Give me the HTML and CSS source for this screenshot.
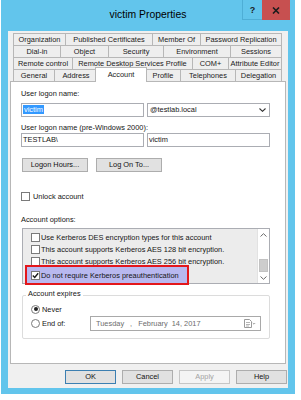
FILE: index.html
```html
<!DOCTYPE html>
<html lang="en">

<head>
    <meta charset="UTF-8">
    <meta name="viewport" content="width=device-width, initial-scale=1.0">
    <title>victim Properties</title>
    <link rel="stylesheet" href="styles.css">
</head>

<body>
    <div class="window">
        <div class="titlebar">
            <span></span>
            <span class="title">victim Properties</span>
            <div class="caption-buttons">
                <div class="cap-btn help">?</div>
                <div class="cap-btn close">
                    <svg width="8" height="7" viewBox="0 0 8 7"><path d="M1 0.5l6 6M7 0.5l-6 6" stroke="#1c1c1c" stroke-width="1.6" fill="none"/></svg>
                </div>
            </div>
        </div>

        <div class="client">
            <!-- Tab strip, four rows -->
            <div class="tabs">
                <div class="tab-row row1">
                    <div class="tab">Organization</div>
                    <div class="tab">Published Certificates</div>
                    <div class="tab">Member Of</div>
                    <div class="tab">Password Replication</div>
                </div>
                <div class="tab-row row2">
                    <div class="tab">Dial-in</div>
                    <div class="tab">Object</div>
                    <div class="tab">Security</div>
                    <div class="tab">Environment</div>
                    <div class="tab">Sessions</div>
                </div>
                <div class="tab-row row3">
                    <div class="tab">Remote control</div>
                    <div class="tab">Remote Desktop Services Profile</div>
                    <div class="tab">COM+</div>
                    <div class="tab">Attribute Editor</div>
                </div>
                <div class="tab-row row4">
                    <div class="tab">General</div>
                    <div class="tab">Address</div>
                    <div class="tab active">Account</div>
                    <div class="tab">Profile</div>
                    <div class="tab">Telephones</div>
                    <div class="tab">Delegation</div>
                </div>
            </div>

            <div class="panel">
                <div class="field-label">User logon name:</div>
                <div class="input-row first">
                    <div class="textbox"><span class="selected-text">victim</span></div>
                    <div class="textbox combo">
                        <span>@testlab.local</span>
                        <svg width="7" height="4" viewBox="0 0 7 4"><polyline points="0.5,0.5 3.5,3.3 6.5,0.5" fill="none" stroke="#333" stroke-width="1.1"/></svg>
                    </div>
                </div>

                <div class="field-label second">User logon name (pre-Windows 2000):</div>
                <div class="input-row">
                    <div class="textbox">TESTLAB\</div>
                    <div class="textbox">victim</div>
                </div>

                <div class="btn-row">
                    <div class="btn wide">Logon Hours...</div>
                    <div class="btn wide">Log On To...</div>
                </div>

                <div class="check-row">
                    <span class="check"></span>
                    <span>Unlock account</span>
                </div>

                <div class="field-label options">Account options:</div>
                <div class="listbox">
                    <div class="list-items">
                        <div class="list-item"><span class="check"></span>Use Kerberos DES encryption types for this account</div>
                        <div class="list-item"><span class="check"></span>This account supports Kerberos AES 128 bit encryption.</div>
                        <div class="list-item"><span class="check"></span>This account supports Kerberos AES 256 bit encryption.</div>
                        <div class="list-item selected">
                            <span class="check">
                                <svg width="7" height="7" viewBox="0 0 7 7"><polyline points="0.8,3.6 2.7,5.4 6.2,1.2" fill="none" stroke="#1a1a1a" stroke-width="1.4"/></svg>
                            </span>Do not require Kerberos preauthentication
                        </div>
                    </div>
                    <div class="scrollbar">
                        <div class="sb-arrow up">
                            <svg width="7" height="4" viewBox="0 0 7 4"><polyline points="0.5,3.5 3.5,0.7 6.5,3.5" fill="none" stroke="#6a6a6a" stroke-width="1"/></svg>
                        </div>
                        <div class="sb-track"><div class="sb-thumb"></div></div>
                        <div class="sb-arrow down">
                            <svg width="7" height="4" viewBox="0 0 7 4"><polyline points="0.5,0.5 3.5,3.3 6.5,0.5" fill="none" stroke="#6a6a6a" stroke-width="1"/></svg>
                        </div>
                    </div>
                </div>

                <div class="group">
                    <div class="group-title">Account expires</div>
                    <div class="radio-row">
                        <span class="radio checked"></span>
                        <span>Never</span>
                    </div>
                    <div class="radio-row">
                        <span class="radio"></span>
                        <span>End of:</span>
                        <div class="datepicker">
                            <span>Tuesday</span>
                            <span class="d-comma">,</span>
                            <span class="d-month">February</span>
                            <span class="d-day">14, 2017</span>
                            <svg class="cal-icon" width="12" height="9" viewBox="0 0 12 9">
                                <path d="M0.5 0.5h5l2 2v6h-7z" fill="#fff" stroke="#9a9a9a"/>
                                <path d="M2 3.5h4M2 5.5h4M2 7h3" stroke="#b5b5b5"/>
                                <polyline points="8.8,4 10,5.2 11.2,4" fill="none" stroke="#a0a0a0"/>
                            </svg>
                        </div>
                    </div>
                </div>
            </div>

            <div class="dialog-buttons">
                <div class="btn default">OK</div>
                <div class="btn">Cancel</div>
                <div class="btn disabled">Apply</div>
                <div class="btn">Help</div>
            </div>
        </div>
    </div>
</body>

</html>
```

FILE: styles.css
```css
/* Global */
* {
    box-sizing: border-box;
}

body {
    margin: 0;
    background: #ffffff;
    font-family: "Liberation Sans", Arial, sans-serif;
    font-size: 7.4px;
    color: #151515;
}

/* Window frame */
.window {
    width: 294px;
    height: 394px;
    margin-left: 1px;
    background: #62c5ec;
    display: flex;
    flex-direction: column;
}

.titlebar {
    height: 31px;
    flex: 0 0 31px;
    display: grid;
    grid-template-columns: 1fr auto 1fr;
    padding: 0 5px;
}

.title {
    font-size: 10.4px;
    line-height: 30px;
    color: #000;
}

.caption-buttons {
    display: flex;
    justify-content: flex-end;
    align-items: flex-start;
}

.cap-btn {
    height: 20px;
    display: flex;
    align-items: center;
    justify-content: center;
}

.cap-btn.help {
    width: 20px;
    font-weight: bold;
    font-size: 9px;
    color: #1c1c1c;
    border: 1px solid #4eaed6;
    border-top: none;
    border-right: none;
}

.cap-btn.close {
    width: 28px;
    background: #c75050;
}

.client {
    flex: 1;
    margin: 0 7px 6px;
    background: #f0f0f0;
    padding-top: 2px;
}

/* Tabs */
.tabs {
    margin: 0 6px 0 5px;
}

.tab-row {
    display: grid;
    height: 12px;
}

.row1 { grid-template-columns: 52px 87px 48px 82px; }
.row2 { grid-template-columns: 47px 48px 55px 67px 52px; }
.row3 { grid-template-columns: 59px 120px 36px 54px; }
.row4 { grid-template-columns: 41px 43px 48px 35px 55px 47px; }

.tab {
    border-top: 1px solid #b7b7b7;
    border-left: 1px solid #b7b7b7;
    background: #eeeeee;
    text-align: center;
    line-height: 11px;
    white-space: nowrap;
    color: #1a1a1a;
}

.tab:last-child {
    border-right: 1px solid #b7b7b7;
}

.tab.active {
    background: #ffffff;
    border-right: 1px solid #b7b7b7;
    margin: -2px -2px -1px;
    line-height: 13px;
    z-index: 1;
}

/* Tab page */
.panel {
    margin: 0 2px;
    height: 283px;
    background: #ffffff;
    border: 1px solid #b7b7b7;
    padding: 7px 15px 0 10px;
}

.field-label {
    line-height: 10px;
}

.field-label.second {
    margin-top: 6px;
}

.field-label.options {
    margin-top: 13px;
}

.input-row {
    display: flex;
    gap: 3px;
}

.input-row.first {
    margin-top: 4px;
}

.textbox {
    width: 123px;
    height: 14px;
    border: 1px solid #abadb3;
    background: #ffffff;
    padding-left: 1px;
    line-height: 12px;
    white-space: nowrap;
}

.selected-text {
    background: #3399ff;
    color: #ffffff;
    padding: 0 1px;
}

.combo {
    display: flex;
    align-items: center;
    justify-content: space-between;
    padding: 0 3px 0 2px;
}

.btn-row {
    display: flex;
    gap: 8px;
    margin: 11px 0 0 1px;
}

.btn {
    width: 51px;
    height: 14px;
    background: #e1e1e1;
    border: 1px solid #adadad;
    text-align: center;
    line-height: 12px;
    color: #111;
}

.btn.wide {
    width: 66px;
}

.btn.default {
    border-color: #3c7fb1;
}

.btn.disabled {
    background: #f4f4f4;
    border-color: #c6c6c6;
    color: #a3a3a3;
}

/* Checkboxes */
.check-row {
    display: flex;
    align-items: center;
    gap: 3px;
    height: 12px;
    margin-top: 18px;
}

.check {
    width: 9px;
    height: 9px;
    flex: 0 0 9px;
    border: 1px solid #7a7a7a;
    background: #ffffff;
    display: flex;
    align-items: center;
    justify-content: center;
}

/* Account options list */
.listbox {
    display: flex;
    width: 248px;
    height: 56px;
    margin: 3px 0 0 1px;
    border: 1px solid #abadb3;
    background: #ececec;
}

.list-items {
    flex: 1;
    padding: 2px 0 0 4px;
}

.list-item {
    display: flex;
    align-items: center;
    gap: 1px;
    width: max-content;
    height: 12px;
    padding: 0 8px 0 4px;
    white-space: nowrap;
}

.list-item.selected {
    height: 16px;
    background: #b8b8ef;
    outline: 2px solid #e3161b;
}

.scrollbar {
    width: 12px;
    display: flex;
    flex-direction: column;
    background: #ffffff;
    border-left: 1px solid #e2e2e2;
}

.sb-arrow {
    height: 12px;
    display: flex;
    align-items: center;
    justify-content: center;
}

.sb-arrow.down {
    height: 11px;
}

.sb-track {
    flex: 1;
    display: flex;
    flex-direction: column;
    justify-content: flex-end;
}

.sb-thumb {
    height: 13px;
    margin: 0 1px;
    background: #cdcdcd;
    border: 1px solid #c2c2c2;
}

/* Account expires group */
.group {
    width: 248px;
    margin: 11px 0 0 1px;
    border: 1px solid #dcdcdc;
    border-radius: 2px;
    padding: 0 8px 7px;
}

.group-title {
    width: max-content;
    margin: -7px 0 0 -5px;
    padding: 0 2px;
    background: #ffffff;
    line-height: 10px;
}

.radio-row {
    display: flex;
    align-items: center;
    gap: 2px;
    height: 12px;
    margin-top: 4px;
}

.radio-row + .radio-row {
    height: 15px;
    margin-top: 1px;
}

.radio {
    width: 9px;
    height: 9px;
    flex: 0 0 9px;
    border: 1px solid #7a7a7a;
    border-radius: 50%;
    background: #ffffff;
    display: flex;
    align-items: center;
    justify-content: center;
}

.radio.checked::after {
    content: "";
    width: 4px;
    height: 4px;
    border-radius: 50%;
    background: #222;
}

.datepicker {
    flex: 0 0 171px;
    margin-left: auto;
    height: 15px;
    display: flex;
    align-items: center;
    border: 1px solid #a9a9a9;
    background: #ffffff;
    padding: 0 4px 0 5px;
    color: #6d6d6d;
    white-space: nowrap;
}

.d-comma {
    margin-left: 6px;
}

.d-month {
    margin-left: 6px;
}

.d-day {
    margin-left: 4px;
}

.cal-icon {
    margin-left: auto;
}

/* Bottom buttons */
.dialog-buttons {
    display: flex;
    justify-content: flex-end;
    gap: 6px;
    margin-top: 6px;
    padding-right: 1px;
}
```
